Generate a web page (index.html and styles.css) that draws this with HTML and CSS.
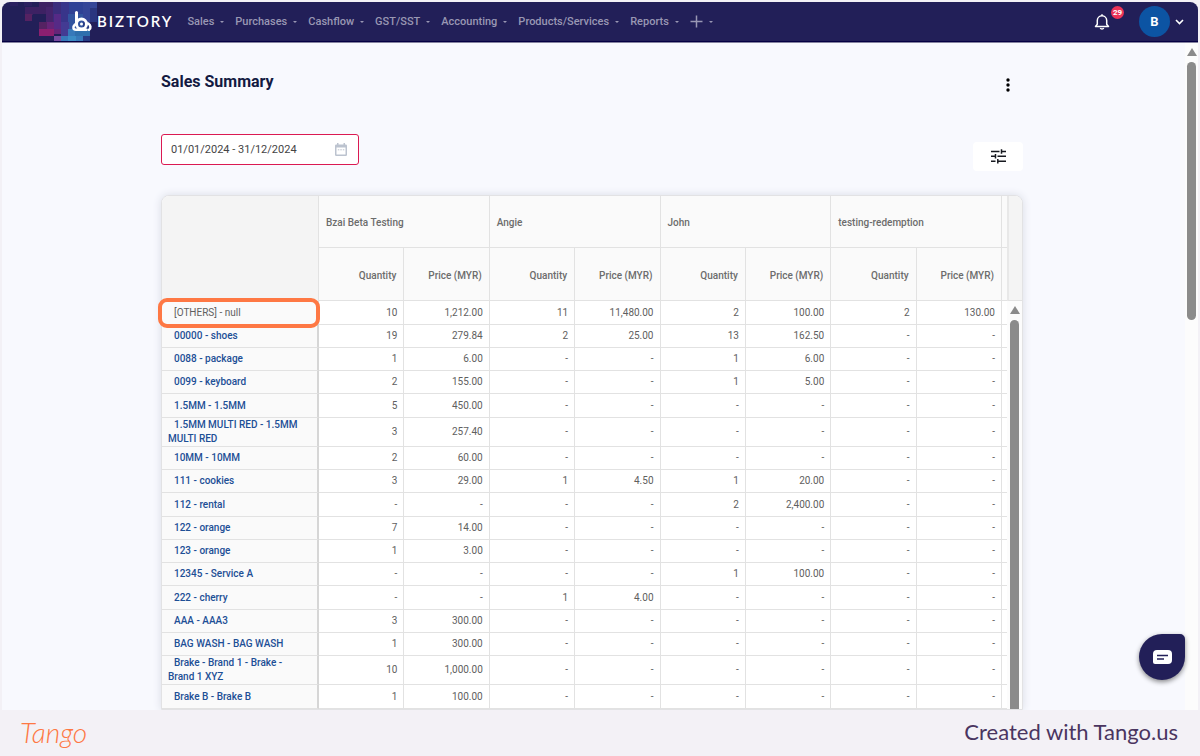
FILE: index.html
```html
<!DOCTYPE html>
<html lang="en">
<head>
<meta charset="utf-8">
<title>Sales Summary</title>
<meta name="viewport" content="width=device-width, initial-scale=1">
<link rel="stylesheet" href="styles.css">
</head>
<body>
<div class="app">
  <header class="topbar">
    <a class="brand" href="#">
      <svg class="brand-art" viewBox="0 0 95 39" width="95" height="39" aria-hidden="true">
        <g shape-rendering="crispEdges">
          <path fill="#2b2060" d="M8 0h8v4H8zM22 0h8v4h-8z"/>
          <path fill="#3d2163" d="M23 5h8v8h-8zM30 5h14v7H30zM37 0h14v5H37z"/>
          <path fill="#552262" d="M23 12h7v7h-7zM37 20h8v7h-8z"/>
          <path fill="#45246c" d="M44 5h8v15h-8z"/>
          <path fill="#8b1f70" d="M37 27h15v7H37z"/>
          <path fill="#662478" d="M45 20h7v7h-7zM52 27h8v5h-8z"/>
          <path fill="#3b2d7c" d="M51 0h8v20h-8z"/>
          <path fill="#562a86" d="M52 12h8v15h-8z"/>
          <path fill="#2f4195" d="M59 0h22v13H59z"/>
          <path fill="#38358a" d="M59 0h8v20h-8z"/>
          <path fill="#32549f" d="M66 12h15v15H66z"/>
          <path fill="#433b93" d="M59 20h8v14h-8z"/>
          <path fill="#354597" d="M81 0h14v6H81zM81 6h7v14h-7z"/>
          <path fill="#2a367f" d="M88 6h7v14h-7z"/>
          <path fill="#774aa0" d="M52 34h8v6h-8z"/>
          <path fill="#3779ba" d="M59 34h22v6H59zM66 27h15v7H66z"/>
          <path fill="#2f70ad" d="M73 27h15v7H73z"/>
          <path fill="#3c8cc5" d="M66 34h8v6h-8z"/>
          <path fill="#283d85" d="M81 20h7v7h-7zM81 34h7v6h-7z"/>
        </g>
        <g fill="none" stroke="#fff" stroke-linecap="round">
          <path stroke-width="3" d="M74.500 10.500v12"/>
          <circle cx="79.500" cy="22" r="5" stroke-width="3"/>
          <path stroke-width="2.500" d="M73 22.500c-2.500 2.500-2 5.300 1 5.300h10.500"/>
          <path stroke-width="2.500" d="M86.300 21.500c2.500 1.500 3 5 .7 6.300"/>
        </g>
        <circle cx="79.500" cy="22" r="1.500" fill="#fff"/>
      </svg>
      <span class="brand-name">BIZTORY</span>
    </a>
    <nav class="menu">
      <button type="button">Sales</button>
      <button type="button">Purchases</button>
      <button type="button">Cashflow</button>
      <button type="button">GST/SST</button>
      <button type="button">Accounting</button>
      <button type="button">Products/Services</button>
      <button type="button">Reports</button>
      <button type="button" aria-label="Add new"><svg width="13" height="13" viewBox="0 0 13 13" aria-hidden="true"><path d="M6.500.5v12M.5 6.500h12" stroke="currentColor" stroke-width="1.500"/></svg></button>
    </nav>
    <div class="account">
      <button type="button" class="bell" aria-label="Notifications">
        <svg width="16" height="18" viewBox="0 0 16 18" fill="none" stroke="#fff" stroke-width="1.500" stroke-linejoin="round" aria-hidden="true"><path d="M1.500 13.500h13l-1.800-2.200V7.500a4.700 4.700 0 0 0-9.400 0v3.800z"/><path d="M6.300 15a1.800 1.500 0 0 0 3.400 0M8 1.200v1.500"/></svg>
        <span class="badge">29</span>
      </button>
      <button type="button" class="user" aria-label="Account menu">
        <span class="avatar">B</span>
        <svg width="9" height="6" viewBox="0 0 9 6" fill="none" stroke="#fff" stroke-width="1.600" aria-hidden="true"><path d="M1 1l3.500 3.500L8 1"/></svg>
      </button>
    </div>
  </header>

  <div class="viewport">
    <main class="page">
      <div class="title-row">
        <h1>Sales Summary</h1>
        <button type="button" class="more" aria-label="More options"><svg width="4" height="14" viewBox="0 0 4 14" aria-hidden="true"><circle cx="2" cy="2" r="1.700"/><circle cx="2" cy="7" r="1.700"/><circle cx="2" cy="12" r="1.700"/></svg></button>
      </div>
      <div class="filter-row">
        <label class="date-field">
          <input type="text" value="01/01/2024 - 31/12/2024" aria-label="Date range">
          <svg width="12" height="13" viewBox="0 0 12 13" aria-hidden="true"><path fill="#bcc3cf" fill-rule="evenodd" d="M2 0h1.500v1.500h5V0H10v1.500h.8q1.200 0 1.200 1.200v9.100q0 1.200-1.200 1.200H1.200Q0 13 0 11.800V2.700q0-1.200 1.200-1.200H2zM1.500 4.500v7h9v-7z"/><path stroke="#bcc3cf" stroke-dasharray="1.500 1" d="M2.800 6.800h6.500"/></svg>
        </label>
        <button type="button" class="tune" aria-label="Table filters"><svg width="15" height="15" viewBox="0 0 15 15" fill="none" stroke="#16181f" stroke-width="1.500" aria-hidden="true"><path d="M0 2.500h8.500M10.500 2.500H15M10.500.3v4.400M0 7.300h4.500M4.500 5v4.600M6.500 7.300H15M0 12.200h4.500M6.800 12.200H15M6.800 9.900v4.600"/></svg></button>
      </div>

      <section class="grid-card">
        <div class="grid-main">
        <table class="grid">
          <colgroup><col class="c-item"><col><col><col><col><col><col><col><col><col class="c-end"></colgroup>
          <thead>
            <tr><td rowspan="2" class="corner"></td><th colspan="2">Bzai Beta Testing</th><th colspan="2">Angie</th><th colspan="2">John</th><th colspan="2">testing-redemption</th><td></td></tr>
            <tr class="sub"><th>Quantity</th><th>Price (MYR)</th><th>Quantity</th><th>Price (MYR)</th><th>Quantity</th><th>Price (MYR)</th><th>Quantity</th><th>Price (MYR)</th><td></td></tr>
          </thead>
          <tbody>
            <tr><th class="marked">[OTHERS] - null</th><td>10</td><td>1,212.00</td><td>11</td><td>11,480.00</td><td>2</td><td>100.00</td><td>2</td><td>130.00</td><td></td></tr>
            <tr><th><a href="#">00000 - shoes</a></th><td>19</td><td>279.84</td><td>2</td><td>25.00</td><td>13</td><td>162.50</td><td>-</td><td>-</td><td></td></tr>
            <tr><th><a href="#">0088 - package</a></th><td>1</td><td>6.00</td><td>-</td><td>-</td><td>1</td><td>6.00</td><td>-</td><td>-</td><td></td></tr>
            <tr><th><a href="#">0099 - keyboard</a></th><td>2</td><td>155.00</td><td>-</td><td>-</td><td>1</td><td>5.00</td><td>-</td><td>-</td><td></td></tr>
            <tr><th><a href="#">1.5MM - 1.5MM</a></th><td>5</td><td>450.00</td><td>-</td><td>-</td><td>-</td><td>-</td><td>-</td><td>-</td><td></td></tr>
            <tr><th><a href="#">1.5MM MULTI RED - 1.5MM MULTI RED</a></th><td>3</td><td>257.40</td><td>-</td><td>-</td><td>-</td><td>-</td><td>-</td><td>-</td><td></td></tr>
            <tr><th><a href="#">10MM - 10MM</a></th><td>2</td><td>60.00</td><td>-</td><td>-</td><td>-</td><td>-</td><td>-</td><td>-</td><td></td></tr>
            <tr><th><a href="#">111 - cookies</a></th><td>3</td><td>29.00</td><td>1</td><td>4.50</td><td>1</td><td>20.00</td><td>-</td><td>-</td><td></td></tr>
            <tr><th><a href="#">112 - rental</a></th><td>-</td><td>-</td><td>-</td><td>-</td><td>2</td><td>2,400.00</td><td>-</td><td>-</td><td></td></tr>
            <tr><th><a href="#">122 - orange</a></th><td>7</td><td>14.00</td><td>-</td><td>-</td><td>-</td><td>-</td><td>-</td><td>-</td><td></td></tr>
            <tr><th><a href="#">123 - orange</a></th><td>1</td><td>3.00</td><td>-</td><td>-</td><td>-</td><td>-</td><td>-</td><td>-</td><td></td></tr>
            <tr><th><a href="#">12345 - Service A</a></th><td>-</td><td>-</td><td>-</td><td>-</td><td>1</td><td>100.00</td><td>-</td><td>-</td><td></td></tr>
            <tr><th><a href="#">222 - cherry</a></th><td>-</td><td>-</td><td>1</td><td>4.00</td><td>-</td><td>-</td><td>-</td><td>-</td><td></td></tr>
            <tr><th><a href="#">AAA - AAA3</a></th><td>3</td><td>300.00</td><td>-</td><td>-</td><td>-</td><td>-</td><td>-</td><td>-</td><td></td></tr>
            <tr><th><a href="#">BAG WASH - BAG WASH</a></th><td>1</td><td>300.00</td><td>-</td><td>-</td><td>-</td><td>-</td><td>-</td><td>-</td><td></td></tr>
            <tr><th><a href="#">Brake - Brand 1 - Brake - Brand 1 XYZ</a></th><td>10</td><td>1,000.00</td><td>-</td><td>-</td><td>-</td><td>-</td><td>-</td><td>-</td><td></td></tr>
            <tr><th><a href="#">Brake B - Brake B</a></th><td>1</td><td>100.00</td><td>-</td><td>-</td><td>-</td><td>-</td><td>-</td><td>-</td><td></td></tr>
          </tbody>
        </table>
        </div>
        <div class="grid-side">
          <div class="side-head"></div>
          <div class="scroll"><span class="arrow"></span><span class="thumb"></span></div>
        </div>
      </section>
    </main>
    <div class="scroll page-scroll"><span class="arrow"></span><span class="thumb"></span></div>
    <button type="button" class="chat" aria-label="Open chat"><svg width="19" height="15" viewBox="0 0 19 15" aria-hidden="true"><path fill="#fff" d="M4 0h11q4 0 4 4v6q0 4-4 4H2q-2 0-2-2V4q0-4 4-4z"/><path stroke="#221f58" stroke-width="1.500" d="M4 5.500h11M4 9h7"/></svg></button>
  </div>
</div>
<footer class="credit">
  <span class="tango">Tango</span>
  <span class="made">Created with Tango.us</span>
</footer>
</body>
</html>
```
FILE: styles.css
```css
* { box-sizing: border-box; }

body {
  margin: 0;
  height: 100vh;
  display: flex;
  flex-direction: column;
  padding: 2px 2px 0;
  background: #f3f1f6;
  font-family: Roboto, "Liberation Sans", sans-serif;
  font-size: 11px;
  color: #606060;
}

button {
  padding: 0;
  border: 0;
  background: none;
  color: inherit;
  font: inherit;
  cursor: pointer;
}

svg { display: block; flex: none; }
a { color: inherit; text-decoration: none; }

.app {
  flex: 1;
  min-height: 0;
  display: flex;
  flex-direction: column;
  border-radius: 8px 8px 0 0;
  overflow: hidden;
  background: #f8f9fe;
}

/* Top bar */
.topbar {
  flex: none;
  display: flex;
  align-items: center;
  height: 40px;
  padding-right: 14px;
  background: #221f58;
  border-bottom: 1px solid #050043;
  box-shadow: 0 1px 0 #8583a0;
  position: relative;
  z-index: 1;
}

.brand { display: flex; align-items: center; }
.brand-name {
  color: #fff;
  font-family: Lato, sans-serif;
  font-size: 15px;
  font-weight: 600;
  line-height: 18px;
  letter-spacing: 2px;
  padding-bottom: 2px;
}

.menu {
  display: flex;
  align-items: center;
  gap: 11px;
  margin-left: 14px;
  color: #9997b3;
  font-weight: 500;
}
.menu button {
  display: flex;
  align-items: center;
  gap: 6px;
  line-height: 16px;
}
.menu button::after {
  content: "";
  border: 2px solid transparent;
  border-top-color: currentColor;
  border-bottom: 0;
}

.account { display: flex; align-items: center; gap: 29px; margin-left: auto; }
.bell { position: relative; }
.badge {
  position: absolute;
  left: 17px;
  top: -7px;
  width: 13px;
  height: 13px;
  border-radius: 50%;
  background: #ec3358;
  color: #fff;
  font-size: 8px;
  font-weight: 700;
  line-height: 13px;
}
.user { display: flex; align-items: center; gap: 5px; }
.avatar {
  width: 31px;
  height: 31px;
  border-radius: 50%;
  background: #0c54a3;
  color: #fff;
  font-size: 13px;
  font-weight: 700;
  line-height: 31px;
}

/* Page */
.viewport {
  flex: 1;
  min-height: 0;
  display: flex;
  position: relative;
  overflow: hidden;
}
.page {
  flex: 1;
  min-width: 0;
  max-width: 862px;
  margin: 0 auto;
  padding-top: 28px;
}

.title-row { display: flex; justify-content: space-between; padding-right: 13px; }
h1 { margin: 0; color: #131a42; font-size: 16px; font-weight: 700; line-height: 24px; }
.more { padding-top: 6px; }

.filter-row {
  display: flex;
  justify-content: space-between;
  align-items: flex-start;
  margin-top: 40px;
}
.date-field {
  display: flex;
  align-items: center;
  width: 198px;
  height: 31px;
  padding: 0 11px 0 9px;
  border: 1px solid #db1a52;
  border-radius: 3px;
  background: #fff;
}
.date-field input {
  flex: 1;
  min-width: 0;
  padding: 0;
  border: 0;
  outline: 0;
  background: none;
  color: #444;
  font: inherit;
}
.tune {
  display: flex;
  align-items: center;
  justify-content: center;
  width: 50px;
  height: 29px;
  margin-top: 8px;
  border-radius: 4px;
  background: #fff;
}

/* Data grid */
.grid-card {
  display: flex;
  margin-top: 24px;
  border: 1px solid #e2e2e4;
  border-radius: 8px 8px 0 0;
  background: #fff;
  box-shadow: 0 0 8px #d9dce6;
}
.grid-main { flex: 1; min-width: 0; }
.grid {
  width: 100%;
  border-collapse: separate;
  border-spacing: 0;
  table-layout: fixed;
  font-size: 10px;
  line-height: 14px;
}
.c-item { width: 157px; }
.c-end { width: 5px; }

.grid th, .grid td {
  padding: 0 6px;
  border-right: 1px solid #e2e2e2;
  border-bottom: 1px solid #e2e2e2;
  font-weight: 400;
  text-align: right;
}
.grid td:last-child { padding: 0; border-right: 0; }
.grid thead tr { height: 52px; }
.grid thead .sub { height: 53px; }
.grid thead th, .grid thead td { background: #fafafa; }
.grid thead th { padding: 3px 7px 0; color: #6c6c6c; font-weight: 500; text-align: left; }
.grid thead .sub th { text-align: right; }
.grid thead .corner { background: #f4f4f4; border-bottom: 0; border-top-left-radius: 7px; }

.grid tbody tr { height: 23px; }
.grid tbody tr:nth-child(4n + 1) { height: 24px; }
.grid tbody th {
  padding-right: 10px;
  border-right: 2px solid #d6d6d6;
  background: #fafafa;
  text-align: left;
  text-indent: 6px;
}
.grid tbody a { color: #1d4f96; font-weight: 500; }

/* Ring drawn over the highlighted row name */
.marked { position: relative; }
.marked::after {
  content: "";
  position: absolute;
  left: -4px;
  right: -3px;
  top: -3px;
  bottom: -4px;
  border: 4px solid #fe7844;
  border-radius: 9px;
}

.grid-side { flex: none; width: 15px; display: flex; flex-direction: column; }
.side-head {
  height: 105px;
  border-left: 2px solid #e8e8e8;
  border-bottom: 1px solid #e2e2e2;
  border-top-right-radius: 7px;
  background: #f4f4f4;
}

/* Scroll bars */
.scroll {
  flex: 1;
  display: flex;
  flex-direction: column;
  align-items: center;
  gap: 6px;
  padding-top: 5px;
  background: #fcfcfc;
}
.arrow {
  border: 5px solid transparent;
  border-bottom: 8px solid #8b8b8b;
  border-top: 0;
}
.thumb { width: 9px; flex: 1; border-radius: 5px 5px 0 0; background: #8b8b8b; }
.page-scroll { flex: none; width: 13px; margin-left: 3px; padding-top: 6px; }
.page-scroll .thumb { flex: none; height: 39%; border-radius: 5px; }

.chat {
  position: absolute;
  right: 13px;
  bottom: 30px;
  display: flex;
  align-items: center;
  justify-content: center;
  width: 46px;
  height: 46px;
  border-radius: 50% 5px 50% 50%;
  background: #221f58;
  box-shadow: 0 2px 5px #0007;
}

/* Footer */
.credit {
  flex: none;
  display: flex;
  justify-content: space-between;
  align-items: center;
  height: 46px;
  padding: 0 20px 3px 18px;
}
.tango {
  color: #fe7844;
  font-family: Lato, sans-serif;
  font-size: 28px;
  font-style: italic;
  font-weight: 300;
}
.made { color: #4a3560; font-family: Lato, sans-serif; font-size: 22px; }
```
